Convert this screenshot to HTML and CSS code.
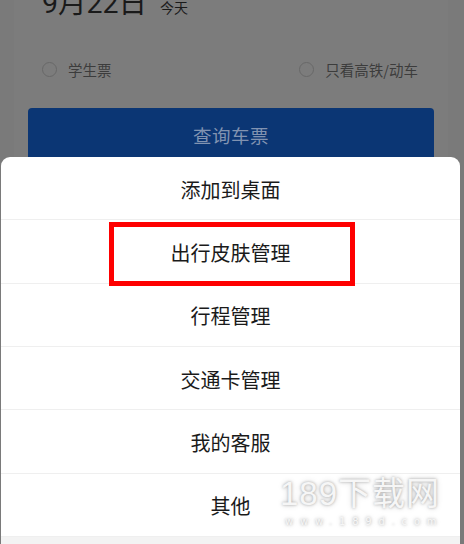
FILE: index.html
```html
<!DOCTYPE html>
<html lang="zh">
<head>
<meta charset="utf-8">
<link rel="stylesheet" href="styles.css">
</head>
<body>
<div class="page">
  <div class="card">
    <div class="date-row">
      <span class="date">9月22日</span>
      <span class="today">今天</span>
    </div>
    <div class="options">
      <label class="opt"><span class="radio"></span>学生票</label>
      <label class="opt"><span class="radio"></span>只看高铁/动车</label>
    </div>
    <div class="search-btn">查询车票</div>
  </div>
</div>
<div class="sheet">
  <div class="item">添加到桌面</div>
  <div class="item">出行皮肤管理<span class="highlight"></span></div>
  <div class="item">行程管理</div>
  <div class="item">交通卡管理</div>
  <div class="item">我的客服</div>
  <div class="item">其他</div>
  <div class="cancel-strip"></div>
</div>
<div class="watermark">
  <div class="wm-title">189下载网</div>
  <div class="wm-url">www.189d.com</div>
</div>
</body>
</html>
```

FILE: styles.css
```css
html, body {
  margin: 0;
  padding: 0;
}
body {
  width: 464px;
  height: 544px;
  overflow: hidden;
  position: relative;
  background: #7a7a7a;
  font-family: "Noto Sans CJK SC", "Noto Sans", sans-serif;
}
.page {
  display: flex;
  flex-direction: column;
}
.card {
  margin-left: 14px;
  width: 434px;
  box-sizing: border-box;
  padding: 0 14px;
  background: #7c7c7c;
  height: 200px;
  display: flex;
  flex-direction: column;
}
.date-row {
  margin-top: -16px;
  height: 40px;
  display: flex;
  align-items: baseline;
  padding-left: 14px;
  gap: 13px;
  color: #1a1a1a;
}
.date {
  font-family: "Roboto", "Noto Sans CJK SC", sans-serif;
  font-size: 28.5px;
  font-weight: 400;
  line-height: 40px;
}
.today {
  font-size: 14px;
  line-height: 20px;
}
.options {
  margin-top: 32px;
  height: 26px;
  display: flex;
  justify-content: space-between;
  align-items: center;
  padding: 0 16px 0 14px;
}
.opt {
  display: flex;
  align-items: center;
  gap: 11px;
  font-size: 14.5px;
  color: #3c3c3c;
}
.radio {
  width: 15px;
  height: 15px;
  border: 1px solid #686868;
  border-radius: 50%;
  box-sizing: border-box;
}
.search-btn {
  margin-top: 26px;
  height: 60px;
  border-radius: 4px;
  background: #0b3674;
  color: #8193b1;
  font-size: 18.5px;
  letter-spacing: 0.5px;
  display: flex;
  justify-content: center;
  padding-top: 14px;
  box-sizing: border-box;
}
.sheet {
  position: absolute;
  left: 1px;
  top: 157px;
  width: 459px;
  height: 387px;
  background: #fff;
  border-radius: 9px 9px 0 0;
  display: flex;
  flex-direction: column;
}
.item {
  position: relative;
  height: 63.33px;
  flex: none;
  box-sizing: border-box;
  border-bottom: 1px solid #efefef;
  display: flex;
  align-items: center;
  justify-content: center;
  padding-top: 2px;
  font-size: 20px;
  color: #1a1a1a;
}
.highlight {
  position: absolute;
  left: 108px;
  top: 2px;
  width: 246px;
  height: 64px;
  box-sizing: border-box;
  border: 5px solid #fe0000;
}
.cancel-strip {
  flex: 1;
  background: #f3f3f3;
}
.watermark {
  position: absolute;
  left: 280px;
  top: 475px;
  color: #f6f6f6;
  text-shadow: 0 0 3px rgba(0, 0, 0, 0.32), 0 0 6px rgba(0, 0, 0, 0.16);
}
.wm-title {
  font-family: "Liberation Sans", "Noto Sans CJK SC", sans-serif;
  font-size: 33px;
  line-height: 38px;
  letter-spacing: 1px;
}
.wm-url {
  font-family: "DejaVu Sans", sans-serif;
  font-size: 10px;
  line-height: 12px;
  letter-spacing: 6.8px;
  margin-top: 3px;
  padding-left: 5px;
}
```
